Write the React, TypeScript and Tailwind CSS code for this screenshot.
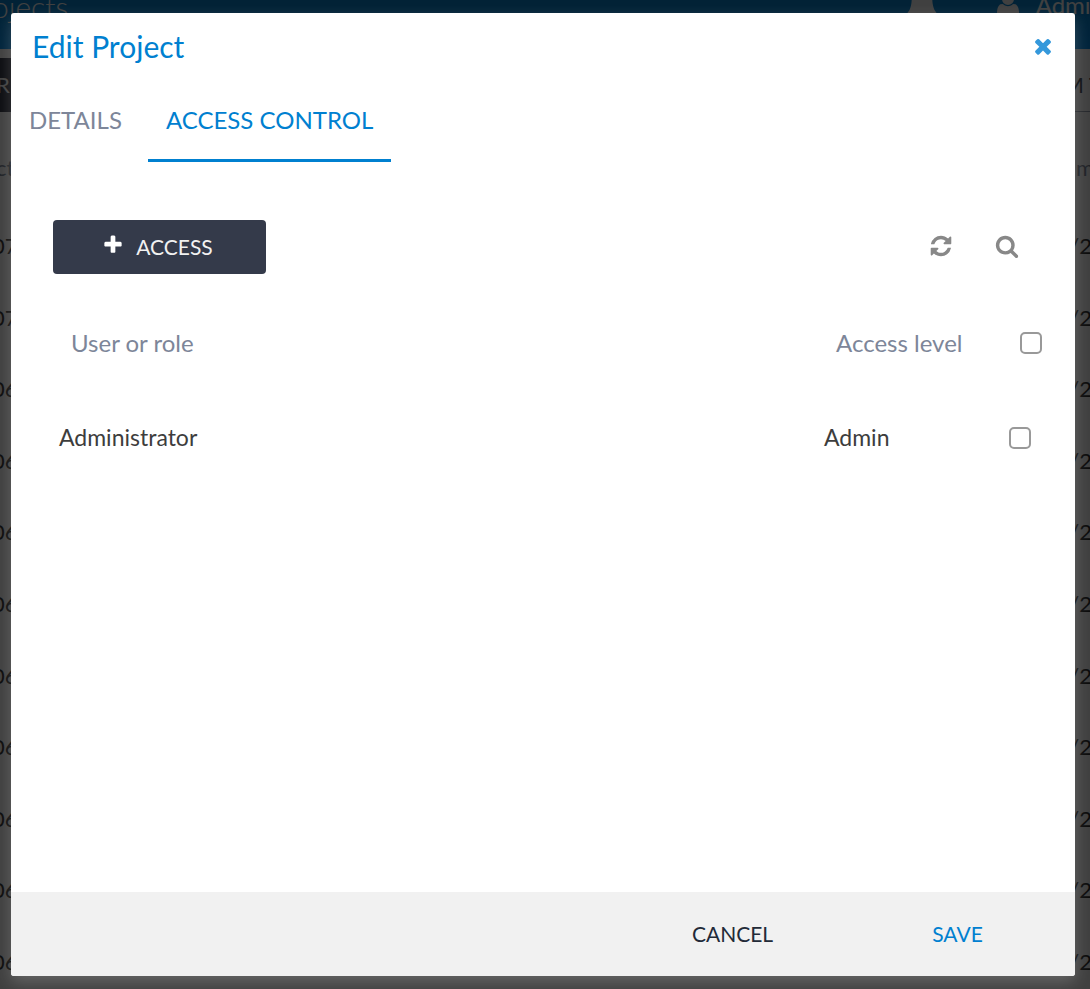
import React, { useState } from 'react';
import clsx from 'clsx';

interface IconProps {
  path: string;
  className?: string;
}

const icons = {
  plus: 'M1600 736v192q0 40-28 68t-68 28h-416v416q0 40-28 68t-68 28h-192q-40 0-68-28t-28-68v-416h-416q-40 0-68-28t-28-68v-192q0-40 28-68t68-28h416v-416q0-40 28-68t68-28h192q40 0 68 28t28 68v416h416q40 0 68 28t28 68z',
  times:
    'M1490 1322q0 40-28 68l-136 136q-28 28-68 28t-68-28l-294-294-294 294q-28 28-68 28t-68-28l-136-136q-28-28-28-68t28-68l294-294-294-294q-28-28-28-68t28-68l136-136q28-28 68-28t68 28l294 294 294-294q28-28 68-28t68 28l136 136q28 28 28 68t-28 68l-294 294 294 294q28 28 28 68z',
  refresh:
    'M1639 1056q0 5-1 7-64 268-268 434.5t-478 166.5q-146 0-282.5-55t-243.5-157l-129 129q-19 19-45 19t-45-19-19-45v-448q0-26 19-45t45-19h448q26 0 45 19t19 45-19 45l-137 137q71 66 161 102t187 36q134 0 250-65t186-179q11-17 53-117 8-23 30-23h192q13 0 22.5 9.5t9.5 22.5zm25-800v448q0 26-19 45t-45 19h-448q-26 0-45-19t-19-45 19-45l138-138q-148-137-349-137-134 0-250 65t-186 179q-11 17-53 117-8 23-30 23h-199q-13 0-22.5-9.5t-9.5-22.5v-7q65-268 270-434.5t480-166.5q146 0 284 55.5t245 156.5l130-129q19-19 45-19t45 19 19 45z',
  search:
    'M1216 832q0-185-131.5-316.5t-316.5-131.5-316.5 131.5-131.5 316.5 131.5 316.5 316.5 131.5 316.5-131.5 131.5-316.5zm512 832q0 52-38 90t-90 38q-54 0-90-38l-343-342q-179 124-399 124-143 0-273.5-55.5t-225-150-150-225-55.5-273.5 55.5-273.5 150-225 225-150 273.5-55.5 273.5 55.5 225 150 150 225 55.5 273.5q0 220-124 399l343 343q37 37 37 90z',
  bell: 'M1728 1408q0 52-38 90t-90 38h-448q0 106-75 181t-181 75-181-75-75-181h-448q-52 0-90-38t-38-90q50-42 91-88t85-119.5 74.5-158.5 50-206 19.5-260q0-152 117-282.5t307-158.5q-8-19-8-39 0-40 28-68t68-28 68 28 28 68q0 20-8 39 190 28 307 158.5t117 282.5q0 139 19.5 260t50 206 74.5 158.5 85 119.5 91 88z',
  user: 'M1600 1405q0 120-73 189.5t-194 69.5h-874q-121 0-194-69.5t-73-189.5q0-53 3.5-103.5t14-109 26.5-108.5 43-97.5 62-81 85.5-53.5 111.5-20q9 0 42 21.5t74.5 48 108 48 133.5 21.5 133.5-21.5 108-48 74.5-48 42-21.5q61 0 111.5 20t85.5 53.5 62 81 43 97.5 26.5 108.5 14 109 3.5 103.5zm-320-893q0 159-112.5 271.5t-271.5 112.5-271.5-112.5-112.5-271.5 112.5-271.5 271.5-112.5 271.5 112.5 112.5 271.5z',
};

const Icon: React.FC<IconProps> = ({ path, className }) => (
  <svg viewBox="0 0 1792 1792" fill="currentColor" aria-hidden="true" className={clsx('shrink-0', className)}>
    <path d={path} />
  </svg>
);

const projectRows = ['07', '07', '06', '06', '06', '06', '06', '06', '06', '06', '06'];

const ProjectsPage: React.FC = () => (
  <div aria-hidden="true" className="fixed inset-0 flex flex-col overflow-hidden bg-white">
    <div className="flex h-[49px] shrink-0 items-start justify-between bg-linear-to-b from-[#0888d8] from-20% to-[#0290f0] text-white">
      <p className="-mt-4 -ml-2 text-[30px] leading-[44px] font-light">ojects</p>
      <div className="-mt-4 flex items-center">
        <Icon path={icons.bell} className="mr-[54px] size-9" />
        <Icon path={icons.user} className="mr-[14px] size-7" />
        <p className="-mr-3.5 text-2xl leading-[42px]">Admin</p>
      </div>
    </div>
    <div className="mt-[9px] flex h-[54px] shrink-0 justify-between text-[22px] leading-[54px]">
      <div className="-ml-1 w-40 bg-[#343a4a] text-white">R</div>
      <div className="-mr-3 w-24 border-b border-gray-400 text-right text-[#343a4a]">M T</div>
    </div>
    <div className="flex h-[98px] shrink-0 items-center justify-between pt-3 text-[22px] text-[#7d8699]">
      <span className="-ml-1">ct</span>
      <span className="-mr-1">m</span>
    </div>
    <div className="flex h-[787px] shrink-0 flex-col text-[22px] text-[#333]">
      {projectRows.map((day, i) => (
        <div key={i} className="flex flex-1 items-center justify-between">
          <span className="-ml-2">{day}</span>
          <span className="-mr-0.5">/2</span>
        </div>
      ))}
    </div>
  </div>
);

interface CheckboxProps {
  label: string;
  checked: boolean;
  onChange: (checked: boolean) => void;
}

const Checkbox: React.FC<CheckboxProps> = ({ label, checked, onChange }) => (
  <input
    type="checkbox"
    aria-label={label}
    checked={checked}
    onChange={(e) => onChange(e.target.checked)}
    className="block size-[22px] appearance-none rounded-[5px] border-2 border-[#999] bg-white checked:bg-[#0080d0]"
  />
);

const App: React.FC = () => {
  const [tab, setTab] = useState('ACCESS CONTROL');
  const [selected, setSelected] = useState(false);

  return (
    <div className="font-['Lato',sans-serif]">
      <ProjectsPage />
      <div className="fixed inset-0 flex bg-black/75 py-[13px] pr-[15px] pl-[11px]">
        <div
          role="dialog"
          aria-labelledby="dialog-title"
          className="flex flex-1 flex-col overflow-hidden rounded-[3px] bg-white shadow-[0_6px_16px_rgba(255,255,255,0.2)]"
        >
          <div className="flex h-[68px] items-center justify-between pr-5 pb-0.5 pl-[21px]">
            <h1 id="dialog-title" className="text-[30px] leading-10 text-[#0080d0]">
              Edit Project
            </h1>
            <button type="button" aria-label="Close" className="text-[#3498db]">
              <Icon path={icons.times} className="size-6" />
            </button>
          </div>

          <div role="tablist" className="flex h-[81px] text-2xl">
            {['DETAILS', 'ACCESS CONTROL'].map((name) => (
              <button
                key={name}
                type="button"
                role="tab"
                aria-selected={tab === name}
                onClick={() => setTab(name)}
                className={clsx(
                  'border-b-[3px] px-[18px] first:mr-2',
                  tab === name ? 'border-[#0080d0] text-[#0080d0]' : 'border-transparent text-[#7d8699]'
                )}
              >
                {name}
              </button>
            ))}
          </div>

          <div className="flex-1 overflow-hidden pt-[58px] pr-[22px] pl-[42px]">
            <div className="flex items-center justify-between pr-[34px]">
              <button
                type="button"
                className="flex h-[54px] w-[213px] items-center justify-center gap-3 rounded bg-[#343a4a] pr-1 text-[21px] text-[#f1f1f1]"
              >
                <Icon path={icons.plus} className="mb-1 size-[22px] text-white" />
                ACCESS
              </button>
              <div className="flex items-center gap-[42px] pb-0.5 text-[#888]">
                <button type="button" aria-label="Refresh">
                  <Icon path={icons.refresh} className="size-6" />
                </button>
                <button type="button" aria-label="Search">
                  <Icon path={icons.search} className="size-6" />
                </button>
              </div>
            </div>

            <table className="mt-[21px] w-full table-fixed text-left">
              <thead>
                <tr className="h-[95px] text-2xl text-[#7d8699]">
                  <th className="pl-[18px] font-normal">User or role</th>
                  <th className="w-[185px] pl-[18px] font-normal">Access level</th>
                  <th className="w-[50px] pl-[17px]">
                    <Checkbox label="Select all" checked={selected} onChange={setSelected} />
                  </th>
                </tr>
              </thead>
              <tbody>
                <tr className="h-[95px] text-[23px] text-[#3d3d3d]">
                  <td className="pl-[6px]">Administrator</td>
                  <td className="pl-[6px]">Admin</td>
                  <td className="pl-[6px]">
                    <Checkbox label="Select Administrator" checked={selected} onChange={setSelected} />
                  </td>
                </tr>
              </tbody>
            </table>
          </div>

          <div className="flex h-[84px] justify-end bg-[#f1f1f1] pr-[5px] text-[21px]">
            <button type="button" className="w-[225px] text-[#222a38]">
              CANCEL
            </button>
            <button type="button" className="w-[225px] text-[#0080d0]">
              SAVE
            </button>
          </div>
        </div>
      </div>
    </div>
  );
};

export default App;
